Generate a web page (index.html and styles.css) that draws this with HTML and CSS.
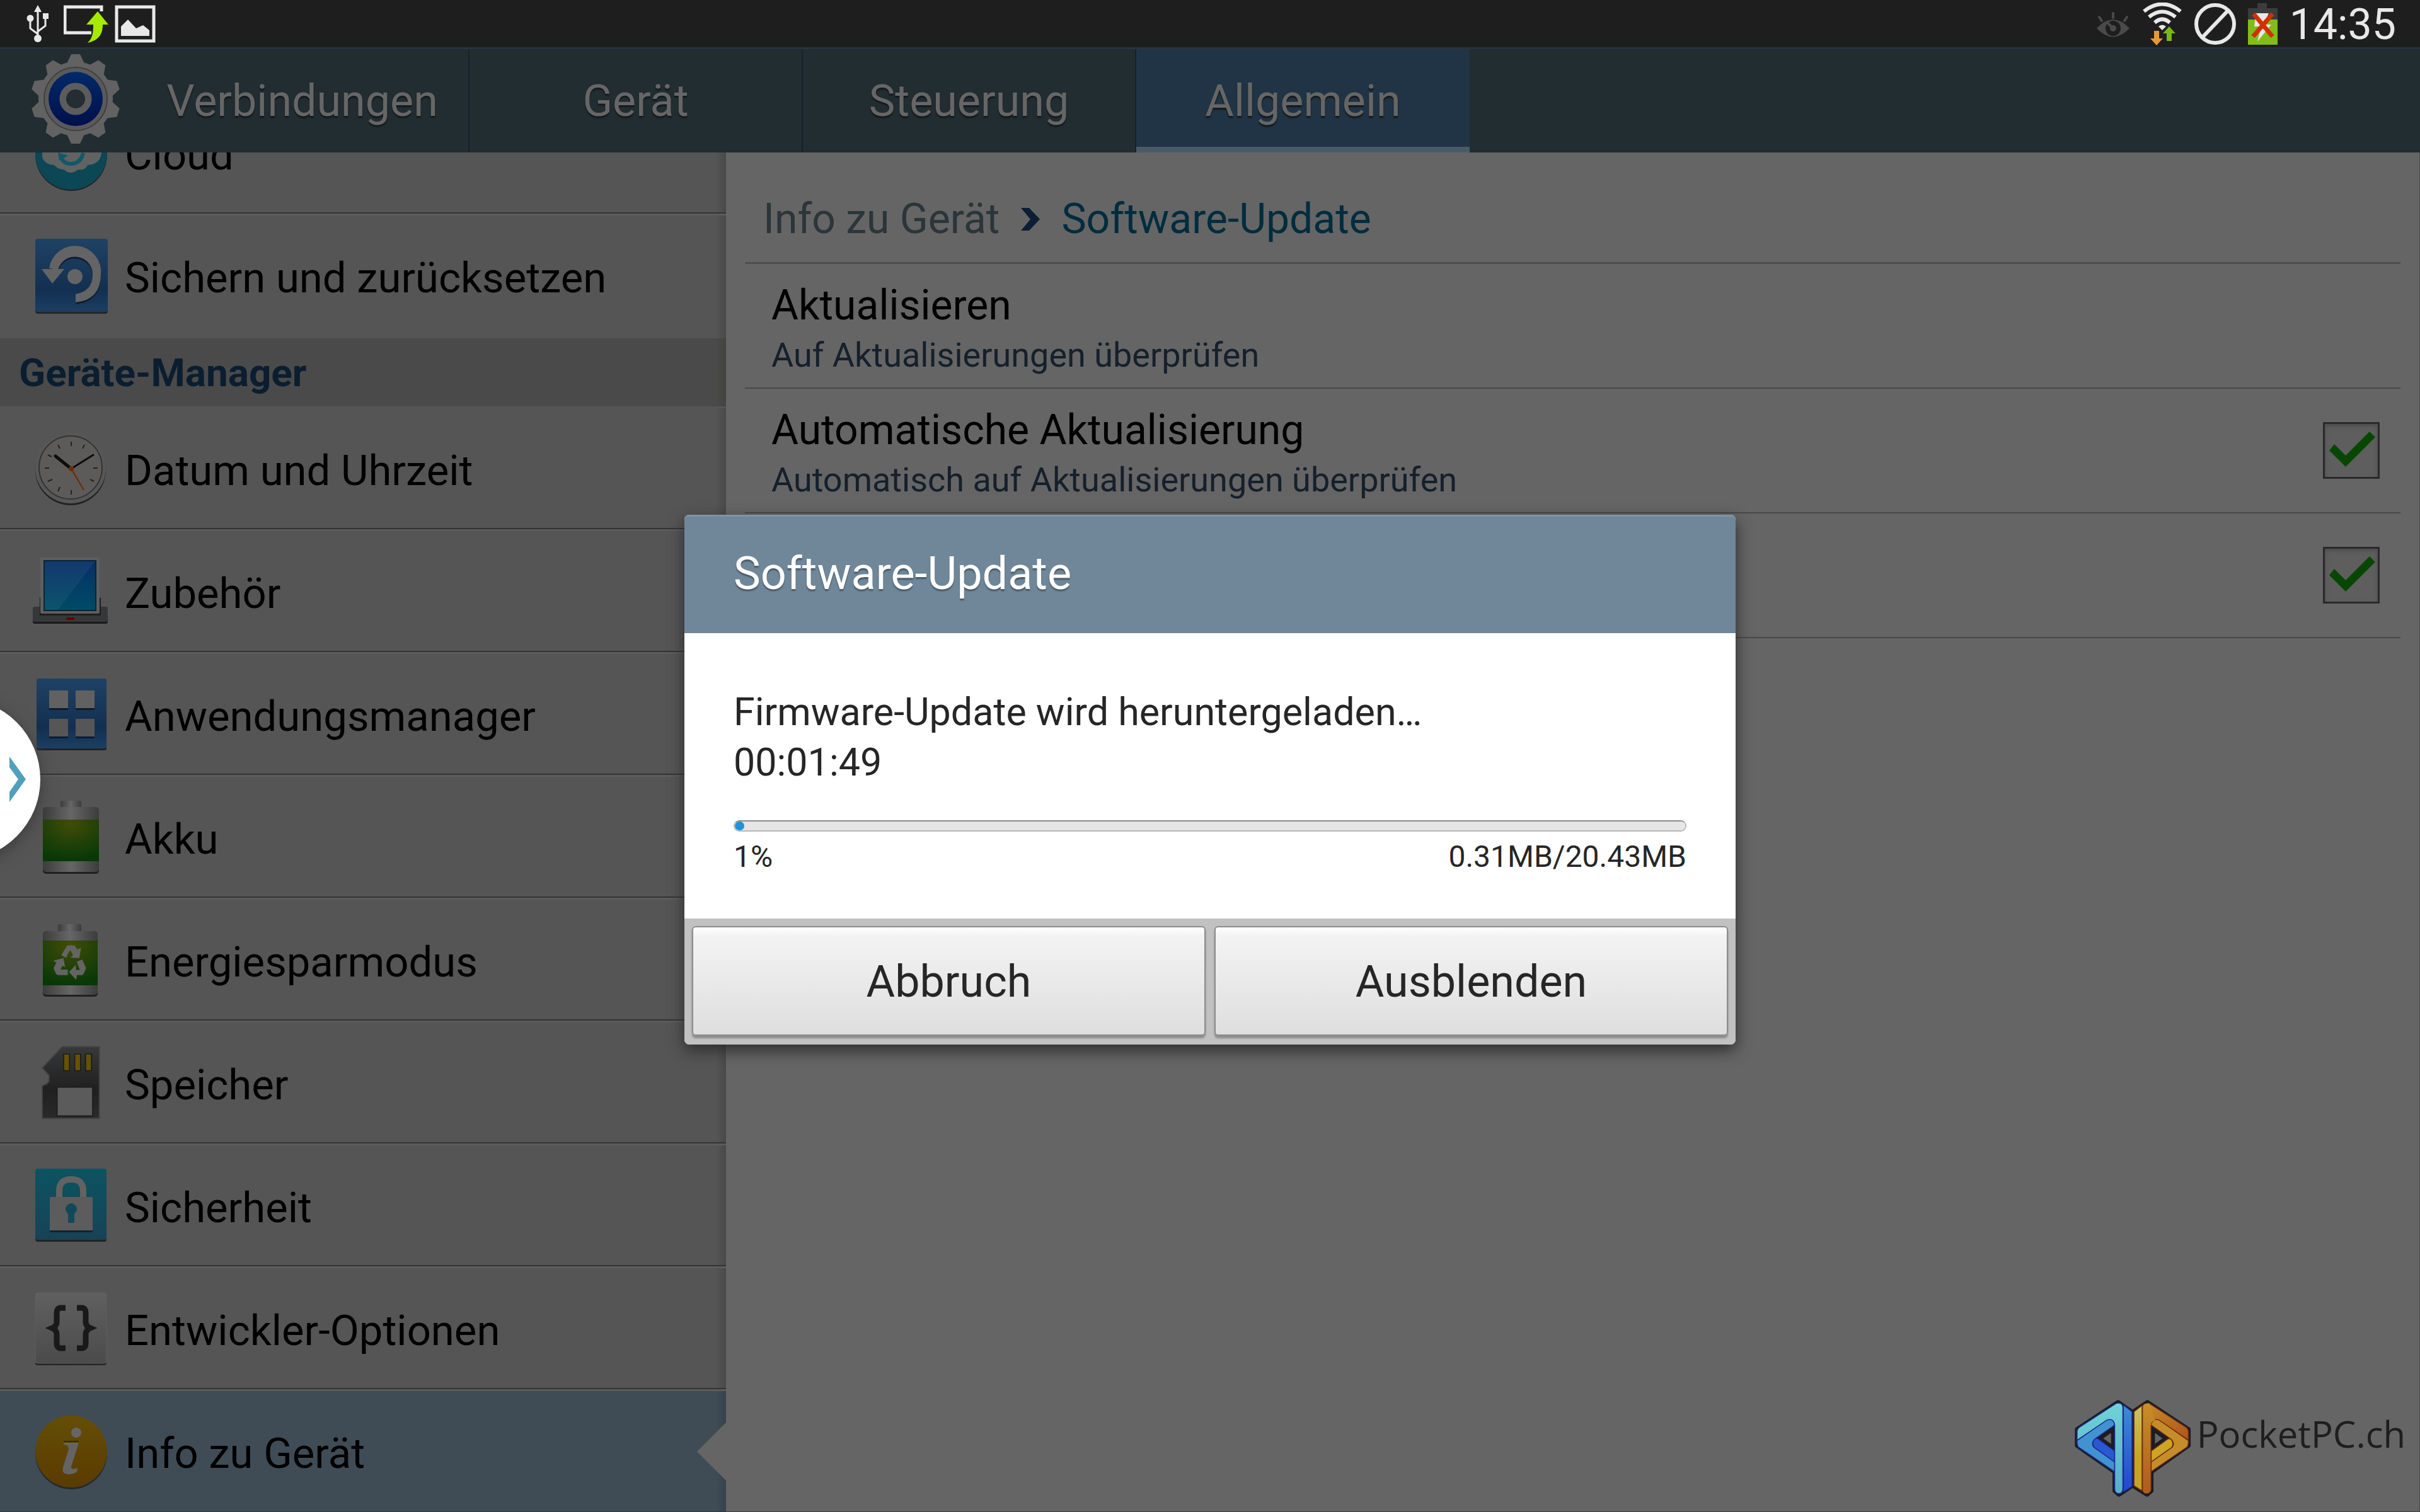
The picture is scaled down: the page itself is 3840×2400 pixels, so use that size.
FILE: index.html
```html
<!DOCTYPE html>
<html lang="de">
<head>
  <meta charset="UTF-8" />
  <meta name="viewport" content="width=device-width, initial-scale=1.0"/>
  <title>Einstellungen</title>
  <link rel="stylesheet" href="styles.css">
</head>
<body>
  <!-- shared gradients -->
  <svg class="defs" width="0" height="0" aria-hidden="true">
    <defs>
      <linearGradient id="blueTile" x1="0" y1="0" x2="0" y2="1"><stop offset="0" stop-color="#1f4264"/><stop offset=".7" stop-color="#132f50"/><stop offset="1" stop-color="#1b3f63"/></linearGradient>
      <linearGradient id="tealTile" x1="0" y1="0" x2="0" y2="1"><stop offset="0" stop-color="#0b5461"/><stop offset="1" stop-color="#184256"/></linearGradient>
      <linearGradient id="greyTile" x1="0" y1="0" x2="0" y2="1"><stop offset="0" stop-color="#606060"/><stop offset="1" stop-color="#4b4b4b"/></linearGradient>
      <linearGradient id="gold" x1="0" y1="0" x2="0" y2="1"><stop offset="0" stop-color="#644e06"/><stop offset="1" stop-color="#5a3b00"/></linearGradient>
      <linearGradient id="screen" x1="0" y1="0" x2="0" y2="1"><stop offset="0" stop-color="#062f66"/><stop offset="1" stop-color="#004b66"/></linearGradient>
      <linearGradient id="metal"><stop offset="0" stop-color="#3c3c3c"/><stop offset=".5" stop-color="#666"/><stop offset="1" stop-color="#3c3c3c"/></linearGradient>
      <radialGradient id="green" cx=".5" cy=".1" r=".9"><stop offset="0" stop-color="#414c08"/><stop offset="1" stop-color="#073807"/></radialGradient>
      <linearGradient id="card" x1="0" y1="0" x2="0" y2="1"><stop offset="0" stop-color="#37383a"/><stop offset=".6" stop-color="#202020"/><stop offset="1" stop-color="#2a2a2a"/></linearGradient>
      <linearGradient id="gearBlue" x1="0" y1="0" x2="0" y2="1"><stop offset="0" stop-color="#002a68"/><stop offset="1" stop-color="#000f4c"/></linearGradient>
    </defs>
  </svg>

  <header class="statusbar">
    <div class="status-left">
      <svg class="usb" width="36" height="60" viewBox="0 0 36 60" aria-hidden="true">
        <path d="M18 8V52M18 46L6 37V22M18 42L30 33V20" fill="none" stroke="#e8e8e8" stroke-width="3"/>
        <path d="M18 0L24 11H12Z" fill="#e8e8e8"/>
        <circle cx="6" cy="21" r="5.500" fill="#e8e8e8"/>
        <rect x="26" y="13" width="9" height="9" fill="#e8e8e8"/>
        <circle cx="18" cy="53" r="6" fill="#e8e8e8"/>
      </svg>
      <svg width="72" height="60" viewBox="0 0 72 60" aria-hidden="true">
        <path d="M60 10V3H2V44H44" fill="none" stroke="#e8e8e8" stroke-width="5"/>
        <path d="M54 10L71 31H62C62 46 56 56 38 60C46 52 47 44 47 31H36Z" fill="#a6ea00"/>
      </svg>
      <svg width="66" height="60" viewBox="0 0 66 60" aria-hidden="true">
        <rect x="3" y="3" width="59" height="54" fill="none" stroke="#e8e8e8" stroke-width="5"/>
        <path d="M10 49V34L21 23L34 37L45 32L55 40V49Z" fill="#e8e8e8"/>
      </svg>
    </div>
    <div class="status-right">
      <svg width="54" height="68" viewBox="0 0 54 68" aria-hidden="true">
        <path d="M1 41Q27 13 53 41Q27 68 1 41Z" fill="#4a4a4a"/>
        <circle cx="27" cy="41" r="12" fill="#1e1e1e"/>
        <circle cx="27" cy="41" r="5" fill="#4a4a4a"/>
        <path d="M27 41L18 32M27 17V24M5 23L9 29M49 23L45 29" stroke="#4a4a4a" stroke-width="4" stroke-linecap="round"/>
      </svg>
      <svg width="64" height="68" viewBox="0 0 64 68" aria-hidden="true">
        <path d="M3 14Q32 -9 61 14" fill="none" stroke="#e8e8e8" stroke-width="6"/>
        <path d="M11 23Q32 6 53 23" fill="none" stroke="#e8e8e8" stroke-width="6"/>
        <path d="M20 32Q32 21 44 32" fill="none" stroke="#e8e8e8" stroke-width="6"/>
        <path d="M26 38Q32 33 38 38L32 44Z" fill="#e8e8e8"/>
        <path d="M19 45H27V57H33L23 68L13 57H19Z" fill="#e39a39"/>
        <path d="M39 61H47V49H53L43 38L33 49H39Z" fill="#7ab51a"/>
      </svg>
      <svg width="66" height="68" viewBox="0 0 66 68" aria-hidden="true">
        <circle cx="33" cy="34" r="30" fill="none" stroke="#e8e8e8" stroke-width="6"/>
        <path d="M12 56L54 12" stroke="#e8e8e8" stroke-width="6"/>
      </svg>
      <svg width="47" height="68" viewBox="0 0 47 68" aria-hidden="true">
        <path d="M0 9H15V1H30V9H47V28H0Z" fill="#3c3c3c"/>
        <rect y="27" width="47" height="40" fill="#82bc18"/>
        <path d="M13 17H33L25 35H37L15 62L21 38H10Z" fill="#e8e8e8"/>
        <path d="M9 18L39 54M39 18L8 54" stroke="#d23000" stroke-width="7"/>
      </svg>
      <time class="clock">14:35</time>
    </div>
  </header>

  <div class="screen">
    <nav class="tabs">
      <svg class="gear" width="144" height="144" viewBox="-72 -72 144 144" aria-hidden="true">
        <defs><path id="tooth" d="M-15 -54L-7 -71H7L15 -54Z"/></defs>
        <g fill="#626262">
          <circle r="59"/>
          <use href="#tooth"/><use href="#tooth" transform="rotate(36)"/><use href="#tooth" transform="rotate(72)"/><use href="#tooth" transform="rotate(108)"/><use href="#tooth" transform="rotate(144)"/>
          <use href="#tooth" transform="rotate(180)"/><use href="#tooth" transform="rotate(216)"/><use href="#tooth" transform="rotate(252)"/><use href="#tooth" transform="rotate(288)"/><use href="#tooth" transform="rotate(324)"/>
        </g>
        <circle r="50" fill="#5a5a5a" stroke="#404040" stroke-width="2"/>
        <circle r="43" fill="url(#gearBlue)"/>
        <circle r="20" fill="none" stroke="#5c5c5c" stroke-width="11"/>
        <circle r="15" fill="#232d32"/>
      </svg>
      <a class="tab" href="#">Verbindungen</a>
      <a class="tab" href="#">Gerät</a>
      <a class="tab" href="#">Steuerung</a>
      <a class="tab active" href="#">Allgemein</a>
    </nav>

    <div class="content">
      <aside class="sidebar">
        <a class="item" href="#">
          <svg class="icon" viewBox="0 0 120 120" aria-hidden="true">
            <circle cx="61" cy="63" r="57" fill="#222"/>
            <circle cx="61" cy="61" r="57" fill="#0c4755"/>
            <path d="M15 50V66Q18 78 34 79Q40 86 49 86Q60 96 72 86Q83 88 87 79Q107 78 109 60V40H15Z" fill="#626262"/>
            <path d="M44 64Q48 78 62 77Q76 76 80 60" fill="none" stroke="#0f5968" stroke-width="6"/>
            <path d="M40 59L56 64L42 72Z" fill="#0f5968"/>
          </svg>
          <span class="label">Cloud</span>
        </a>
        <a class="item last" href="#">
          <svg class="icon" viewBox="0 0 120 120" aria-hidden="true">
            <rect x="4" y="4" width="115" height="116" rx="4" fill="#252525"/>
            <rect x="4" y="1" width="115" height="116" rx="4" fill="url(#blueTile)"/>
            <path d="M68 102V89Q95 84 95 58A28 28 0 0 0 40 50L26 48A41 41 0 0 1 108 59Q107 98 68 102Z" fill="#0d1e33" transform="translate(0 3)"/>
            <path d="M68 102V89Q95 84 95 58A28 28 0 0 0 40 50L26 48A41 41 0 0 1 108 59Q107 98 68 102Z" fill="#646464"/>
            <path d="M14 49H50L31 72Z" fill="#646464"/>
            <circle cx="67" cy="61" r="12" fill="#646464"/>
          </svg>
          <span class="label">Sichern und zurücksetzen</span>
        </a>

        <h2 class="section">Geräte-Manager</h2>

        <a class="item" href="#">
          <svg class="icon" viewBox="0 0 120 120" aria-hidden="true">
            <circle cx="60" cy="62" r="56" fill="#222"/>
            <circle cx="60" cy="59" r="56" fill="#575757"/>
            <circle cx="60" cy="58" r="50" fill="#5d5b59" stroke="#333" stroke-width="2"/>
            <g stroke="#222" stroke-width="2">
              <path d="M61 17V24M61 94V101M19 59H26M96 59H103M40 22L43 28M82 22L79 28M24 38L30 41M24 80L31 77M40 96L43 89M97 80L91 77"/>
            </g>
            <path d="M61 60L36 40" stroke="#0c0c0c" stroke-width="5" stroke-linecap="round"/>
            <path d="M61 60L96 38" stroke="#0c0c0c" stroke-width="3" stroke-linecap="round"/>
            <path d="M61 60L81 94" stroke="#6a2c00" stroke-width="2"/>
            <circle cx="61" cy="60" r="4" fill="#6e2c00"/>
          </svg>
          <span class="label">Datum und Uhrzeit</span>
        </a>
        <a class="item" href="#">
          <svg class="icon" viewBox="0 0 120 120" aria-hidden="true">
            <rect x="0" y="86" width="119" height="25" rx="3" fill="#1a1a1a"/>
            <rect x="0" y="84" width="119" height="24" rx="3" fill="#363739"/>
            <rect x="11" y="70" width="97" height="28" fill="#1e1e1e"/>
            <rect x="12" y="6" width="94" height="89" rx="2" fill="#5e5e5e"/>
            <rect x="17" y="10" width="84" height="81" fill="#0c2436"/>
            <rect x="19" y="12" width="80" height="77" fill="url(#screen)"/>
            <path d="M99 12L40 89H19V12Z" fill="#fff" opacity=".05"/>
            <rect x="53" y="101" width="13" height="4" rx="2" fill="#660000"/>
          </svg>
          <span class="label">Zubehör</span>
        </a>
        <a class="item" href="#">
          <svg class="icon" viewBox="0 0 120 120" aria-hidden="true">
            <rect x="6" y="6" width="111" height="111" rx="3" fill="#222"/>
            <rect x="6" y="3" width="111" height="111" rx="3" fill="url(#blueTile)"/>
            <path d="M26 24H56V53H26ZM68 24H98V53H68ZM26 69H56V98H26ZM68 69H98V98H68Z" fill="#0b1c30"/>
            <path d="M26 22H56V50H26ZM68 22H98V50H68Z" fill="#616161"/>
            <path d="M26 67H56V95H26ZM68 67H98V95H68Z" fill="#565656"/>
          </svg>
          <span class="label">Anwendungsmanager</span>
        </a>
        <a class="item" href="#">
          <svg class="icon" viewBox="0 0 120 120" aria-hidden="true">
            <rect x="16" y="16" width="89" height="102" rx="5" fill="#202020"/>
            <rect x="44" y="2" width="33" height="12" rx="2" fill="url(#metal)"/>
            <rect x="16" y="12" width="89" height="103" rx="5" fill="url(#metal)"/>
            <rect x="16" y="32" width="89" height="66" fill="url(#green)"/>
          </svg>
          <span class="label">Akku</span>
        </a>
        <a class="item" href="#">
          <svg class="icon" viewBox="0 0 120 120" aria-hidden="true">
            <rect x="16" y="18" width="87" height="100" rx="5" fill="#202020"/>
            <rect x="40" y="3" width="37" height="13" rx="2" fill="url(#metal)"/>
            <rect x="16" y="14" width="87" height="101" rx="5" fill="url(#metal)"/>
            <rect x="16" y="29" width="87" height="71" fill="url(#green)"/>
            <g transform="translate(-52 -264) scale(.3827)" fill="#646464">
              <path d="M254 826L278 788L284 785H304L312 789L320 802L336 796L329 838L293 836L303 825L292 806L286 812L274 837Z"/>
              <path d="M318 853L341 844L357 880L347 903L341 909H319L316 928L286 896L314 866L316 888L331 887Z"/>
              <path d="M220 849L263 838L270 875L258 871L251 886H281V909H239L232 903L222 880L234 857Z"/>
            </g>
          </svg>
          <span class="label">Energiesparmodus</span>
        </a>
        <a class="item" href="#">
          <svg class="icon" viewBox="0 0 120 120" aria-hidden="true">
            <g transform="translate(-52 -459) scale(.3827)">
              <path d="M258 1206H412V1503H175V1368L193 1360L203 1350V1325L192 1312L175 1294Z" fill="url(#card)" stroke="#444" stroke-width="5"/>
              <path d="M262 1234H290V1307H262ZM308 1234H336V1307H308ZM352 1234H382V1307H352Z" fill="#1b1b1b"/>
              <path d="M266 1238H286V1303H266ZM312 1238H332V1303H312ZM357 1238H377V1303H357Z" fill="#665200"/>
              <path d="M237 1374H384V1493H237Z" fill="#5b5b5b" stroke="#1b1b1b" stroke-width="4"/>
            </g>
          </svg>
          <span class="label">Speicher</span>
        </a>
        <a class="item" href="#">
          <svg class="icon" viewBox="0 0 120 120" aria-hidden="true">
            <rect x="4" y="4" width="113" height="113" rx="4" fill="#222"/>
            <rect x="4" y="1" width="113" height="113" rx="4" fill="url(#tealTile)"/>
            <rect x="27" y="49" width="68" height="53" fill="#0c2530"/>
            <path d="M42 48V36Q42 18 61 18Q80 18 80 36V48" fill="none" stroke="#626262" stroke-width="10"/>
            <rect x="27" y="46" width="68" height="53" fill="#5c5c5c"/>
            <circle cx="61" cy="65" r="9" fill="#12495a"/>
            <rect x="56" y="68" width="10" height="19" fill="#12495a"/>
          </svg>
          <span class="label">Sicherheit</span>
        </a>
        <a class="item" href="#">
          <svg class="icon" viewBox="0 0 120 120" aria-hidden="true">
            <rect x="4" y="6" width="113" height="112" rx="4" fill="#252525"/>
            <rect x="4" y="3" width="113" height="112" rx="4" fill="url(#greyTile)" stroke="#5f5f5f"/>
            <path d="M52 27H43Q38 28 38 35V49Q38 56 31 59Q38 62 38 69V83Q38 90 43 91H52M70 27H79Q84 28 84 35V49Q84 56 91 59Q84 62 84 69V83Q84 90 79 91H70" fill="none" stroke="#191919" stroke-width="9"/>
          </svg>
          <span class="label">Entwickler-Optionen</span>
        </a>
        <a class="item selected" href="#">
          <svg class="icon" viewBox="0 0 120 120" aria-hidden="true">
            <circle cx="61" cy="63" r="57" fill="#222a30"/>
            <circle cx="61" cy="60" r="57" fill="url(#gold)"/>
            <circle cx="69" cy="30" r="8" fill="#666"/>
            <path d="M49 46H73L61 84Q60 90 71 86L70 92Q65 96 57 96Q45 96 48 85L57 56Q58 50 49 49Z" fill="#646464"/>
            <path d="M49 44H73" stroke="#3a2800" stroke-width="2"/>
          </svg>
          <span class="label">Info zu Gerät</span>
        </a>
      </aside>

      <main class="panel">
        <div class="breadcrumb">
          <a href="#">Info zu Gerät</a>
          <svg width="30" height="36" viewBox="0 0 30 36" aria-hidden="true"><path d="M0 0H13L30 18L13 36H0L15 18Z" fill="#0b1e33"/></svg>
          <span class="current">Software-Update</span>
        </div>
        <div class="setting">
          <div class="setting-text">
            <p class="title">Aktualisieren</p>
            <p class="summary">Auf Aktualisierungen überprüfen</p>
          </div>
        </div>
        <div class="setting">
          <label class="setting-text" for="autoUpdate">
            <span class="title">Automatische Aktualisierung</span>
            <span class="summary">Automatisch auf Aktualisierungen überprüfen</span>
          </label>
          <input class="check" type="checkbox" id="autoUpdate" checked>
        </div>
        <div class="setting">
          <div class="setting-text"></div>
          <input class="check" type="checkbox" aria-label="Nur WLAN" checked>
        </div>
      </main>
    </div>

    <button class="drawer" type="button" aria-label="Leiste öffnen">
      <svg width="26" height="72" viewBox="0 0 26 72" aria-hidden="true"><path d="M0 0L26 36L0 72V56L14 36L0 17Z" fill="#519fbd"/></svg>
    </button>

    <div class="overlay">
      <section class="dialog" role="dialog" aria-labelledby="dialogTitle">
        <h1 class="dialog-title" id="dialogTitle">Software-Update</h1>
        <div class="dialog-body">
          <label class="message" for="download">Firmware-Update wird heruntergeladen…<br>00:01:49</label>
          <progress class="bar" id="download" value="1" max="100"></progress>
          <div class="numbers">
            <span>1%</span>
            <span>0.31MB/20.43MB</span>
          </div>
        </div>
        <div class="buttons">
          <button type="button">Abbruch</button>
          <button type="button">Ausblenden</button>
        </div>
      </section>
    </div>

    <div class="brand">
      <svg width="186" height="156" viewBox="0 0 186 156" aria-hidden="true">
        <defs>
          <linearGradient id="b1" x1="0" y1="0" x2="0" y2="1"><stop offset="0" stop-color="#70d3d4"/><stop offset="1" stop-color="#57abd0"/></linearGradient>
          <linearGradient id="b2" x1="0" y1="0" x2="0" y2="1"><stop offset="0" stop-color="#3a8fd0"/><stop offset="1" stop-color="#2145d0"/></linearGradient>
          <linearGradient id="o1" x1="0" y1="0" x2="0" y2="1"><stop offset="0" stop-color="#cbc35c"/><stop offset=".6" stop-color="#c9a424"/><stop offset="1" stop-color="#c9a020"/></linearGradient>
          <linearGradient id="o2" x1="0" y1="0" x2="0" y2="1"><stop offset="0" stop-color="#c78f26"/><stop offset="1" stop-color="#b05a1e"/></linearGradient>
          <linearGradient id="o3" x1="0" y1="0" x2="1" y2="1"><stop offset="0" stop-color="#c78f26"/><stop offset="1" stop-color="#b0521b"/></linearGradient>
        </defs>
        <g transform="translate(-49 -42) scale(.3827 .3333)" stroke-linejoin="round">
          <path fill-rule="evenodd" d="M308 136L368 184L430 136L600 265V345L446 470V560L428 578L368 535L312 578L294 560V470L138 345V265ZM288 264L232 310L288 354ZM452 264L506 310L452 354Z" fill="#1c1c22" stroke="#1c1c22" stroke-width="18"/>
          <g stroke-width="4" stroke="#1b2a94">
            <path d="M330 150L366 182V538L330 565Z" fill="url(#b2)"/>
            <path d="M205 320Q200 345 212 355L294 422V370L226 312Q214 305 205 320Z" fill="#2a58d2"/>
            <path d="M138 320L262 220Q290 212 294 246L212 312Q196 330 206 350L294 422V468L145 352Q138 345 138 320Z" fill="#4093d0"/>
            <path d="M138 318V275Q140 262 150 255L300 143Q328 136 328 165V552Q326 572 312 572Q296 572 294 552V246Q290 212 262 222Z" fill="url(#b1)"/>
          </g>
          <g stroke-width="4" stroke="#6a2a16">
            <path d="M374 182L408 152V560L374 535Z" fill="url(#o1)"/>
            <path d="M532 320Q540 345 528 355L445 422V370L512 314Q524 306 532 320Z" fill="#cda424"/>
            <path d="M600 320L478 220Q450 212 445 246L526 312Q544 330 534 350L445 422V468L593 352Q600 345 600 320Z" fill="#c58d2a"/>
            <path d="M600 318V275Q598 262 588 255L438 143L412 150L446 240Q450 212 478 222Z" fill="url(#o3)" />
            <path d="M409 165Q412 138 438 143L462 222Q446 226 445 246V552Q442 572 426 572Q411 572 409 552Z" fill="url(#o2)" stroke="none"/>
            <path d="M409 150V560M445 246V552" fill="none"/>
          </g>
        </g>
      </svg>
      <span>PocketPC.ch</span>
    </div>
  </div>
</body>
</html>
```
FILE: styles.css
```css
* { box-sizing: border-box; }
body {
  margin: 0;
  height: 100vh;
  display: flex;
  flex-direction: column;
  overflow: hidden;
  background: #656565;
  font-family: Roboto, "Noto Sans", sans-serif;
  font-size: 66px;
  color: #000;
}
a { color: inherit; text-decoration: none; }
h1, h2, p { margin: 0; font-weight: normal; }
svg { display: block; flex-shrink: 0; }
.defs { position: absolute; }

/* status bar */
.statusbar {
  height: 75px;
  padding: 0 38px 0 42px;
  display: flex;
  align-items: center;
  justify-content: space-between;
  background: #1e1e1e;
}
.status-left { display: flex; gap: 9px; }
.usb { margin-right: 14px; }
.status-right { display: flex; align-items: center; gap: 19px; }
.clock { padding-top: 3px; font-size: 68px; line-height: 72px; color: #e8e8e8; }

.screen {
  position: relative;
  flex: 1;
  min-height: 0;
  display: flex;
  flex-direction: column;
}

/* tabs */
.tabs {
  height: 167px;
  display: flex;
  background: #222d32;
  border-top: 3px solid #2b323c;
}
.gear { margin: 7px 24px 0 48px; }
.tab {
  width: 529px;
  display: flex;
  align-items: center;
  justify-content: center;
  border-right: 2px solid #192025;
  font-size: 70px;
  color: #666;
  text-shadow: 0 3px 2px #14191c;
}
.tab.active {
  background: #203445;
  border-right: 0;
  box-shadow: inset 0 -9px #4a5b68;
}

.content { flex: 1; min-height: 0; display: flex; }

/* left list */
.sidebar {
  width: 30%;
  display: flex;
  flex-direction: column;
  justify-content: flex-end;
  overflow: hidden;
  background: linear-gradient(to left, #494949, #555 16px);
}
.item {
  position: relative;
  flex-shrink: 0;
  height: 195px;
  padding-left: 52px;
  display: flex;
  align-items: center;
  gap: 26px;
  border-bottom: 3px solid #5c5c5c;
  box-shadow: inset 0 -2px #333;
}
.item.last { border-color: transparent; box-shadow: none; }
.icon { width: 120px; height: 120px; }
.label { padding-top: 6px; font-size: 67px; line-height: 80px; }
.section {
  flex-shrink: 0;
  padding: 19px 30px 17px;
  border-bottom: 3px solid #555;
  background: linear-gradient(to left, #42423f, #4a4a4a 16px);
  font-size: 62px;
  line-height: 72px;
  font-weight: bold;
  color: #0b1e30;
}
.item.selected {
  height: 192px;
  border-bottom: 1px solid #2c3640;
  box-shadow: none;
  background: linear-gradient(to left, #36424c, #3f4c56 16px);
}
.item.selected::after {
  content: "";
  position: absolute;
  right: 0;
  top: 50px;
  width: 46px;
  height: 92px;
  background: #656565;
  clip-path: polygon(100% 0, 0 50%, 100% 100%);
}

/* right side */
.panel {
  flex: 1;
  padding: 66px 30px 0 30px;
  border-right: 1px solid #4a4a4a;
  border-bottom: 1px solid #3c3c3c;
}
.breadcrumb {
  display: flex;
  align-items: center;
  gap: 34px;
  padding: 0 29px 28px;
  border-bottom: 3px solid #495055;
  line-height: 80px;
  color: #2b353a;
}
.current { color: #002d3e; }
.setting {
  height: 198px;
  padding: 14px 33px 0 42px;
  display: flex;
  align-items: center;
  justify-content: space-between;
  border-bottom: 2px solid #484848;
}
.title, .summary { display: block; }
.title { line-height: 80px; }
.summary { font-size: 54px; line-height: 78px; color: #16202b; }
.check {
  appearance: none;
  width: 90px;
  height: 90px;
  margin: 0 0 14px;
  border: 3px solid #2a2a2a;
  background: #5e5e5e;
  box-shadow: inset 0 3px 6px #4c4c4c;
}
.check:checked::before {
  content: "";
  display: block;
  height: 84px;
  background: #084702;
  clip-path: polygon(15px 32px, 33px 50px, 71px 12px, 80px 21px, 33px 68px, 7px 42px);
}

/* drawer handle on the left edge */
.drawer {
  position: absolute;
  left: -192px;
  top: calc(50% - 129px);
  width: 256px;
  height: 256px;
  padding: 0 23px 0 0;
  display: flex;
  align-items: center;
  justify-content: flex-end;
  border: 0;
  border-radius: 50%;
  background: #fff;
  box-shadow: 0 6px 24px #3c3c3c;
}

/* dialog */
.overlay {
  position: absolute;
  inset: 0;
  display: flex;
  align-items: center;
  justify-content: center;
  pointer-events: none;
}
.dialog {
  width: 1668px;
  max-width: 100%;
  border-radius: 8px;
  overflow: hidden;
  background: #fff;
  color: #262626;
  box-shadow: 0 9px 24px #2c2c2c;
  pointer-events: auto;
}
.dialog-title {
  padding: 0 78px;
  background: #6f8799;
  box-shadow: inset 0 3px #7e94a3;
  font-size: 72px;
  line-height: 188px;
  color: #fff;
  text-shadow: 0 3px 2px #4a5a66;
}
.dialog-body { padding: 85px 78px 70px; }
.message { display: block; font-size: 61px; line-height: 80px; }
.bar {
  appearance: none;
  display: block;
  width: 100%;
  height: 18px;
  margin: 52px 0 12px;
  border: 2px solid #b8b8b8;
  border-top-color: #8c8c8c;
  border-radius: 9px;
  overflow: hidden;
}
.bar::-webkit-progress-bar { background: #e6e6e6; }
.bar::-webkit-progress-value { background: #1c93dc; border-radius: 7px; }
.numbers {
  display: flex;
  justify-content: space-between;
  font-size: 48px;
  line-height: 56px;
}
.buttons {
  display: flex;
  gap: 14px;
  padding: 12px 12px 14px;
  background: #c1c1c1;
}
.buttons button {
  flex: 1;
  height: 174px;
  padding: 2px 0 0;
  border: 2px solid #8c8c8c;
  border-radius: 6px;
  background: linear-gradient(#fff, #f3f3f3 8%, #dedede);
  box-shadow: 0 4px 3px #8c8c8c;
  font-family: inherit;
  font-size: 70px;
  color: #262626;
}

/* watermark */
.brand {
  position: absolute;
  right: 23px;
  bottom: 22px;
  display: flex;
  gap: 8px;
  font-family: "Open Sans", "Noto Sans", sans-serif;
  font-size: 58px;
  line-height: 108px;
  color: #1e1e1e;
}
```
